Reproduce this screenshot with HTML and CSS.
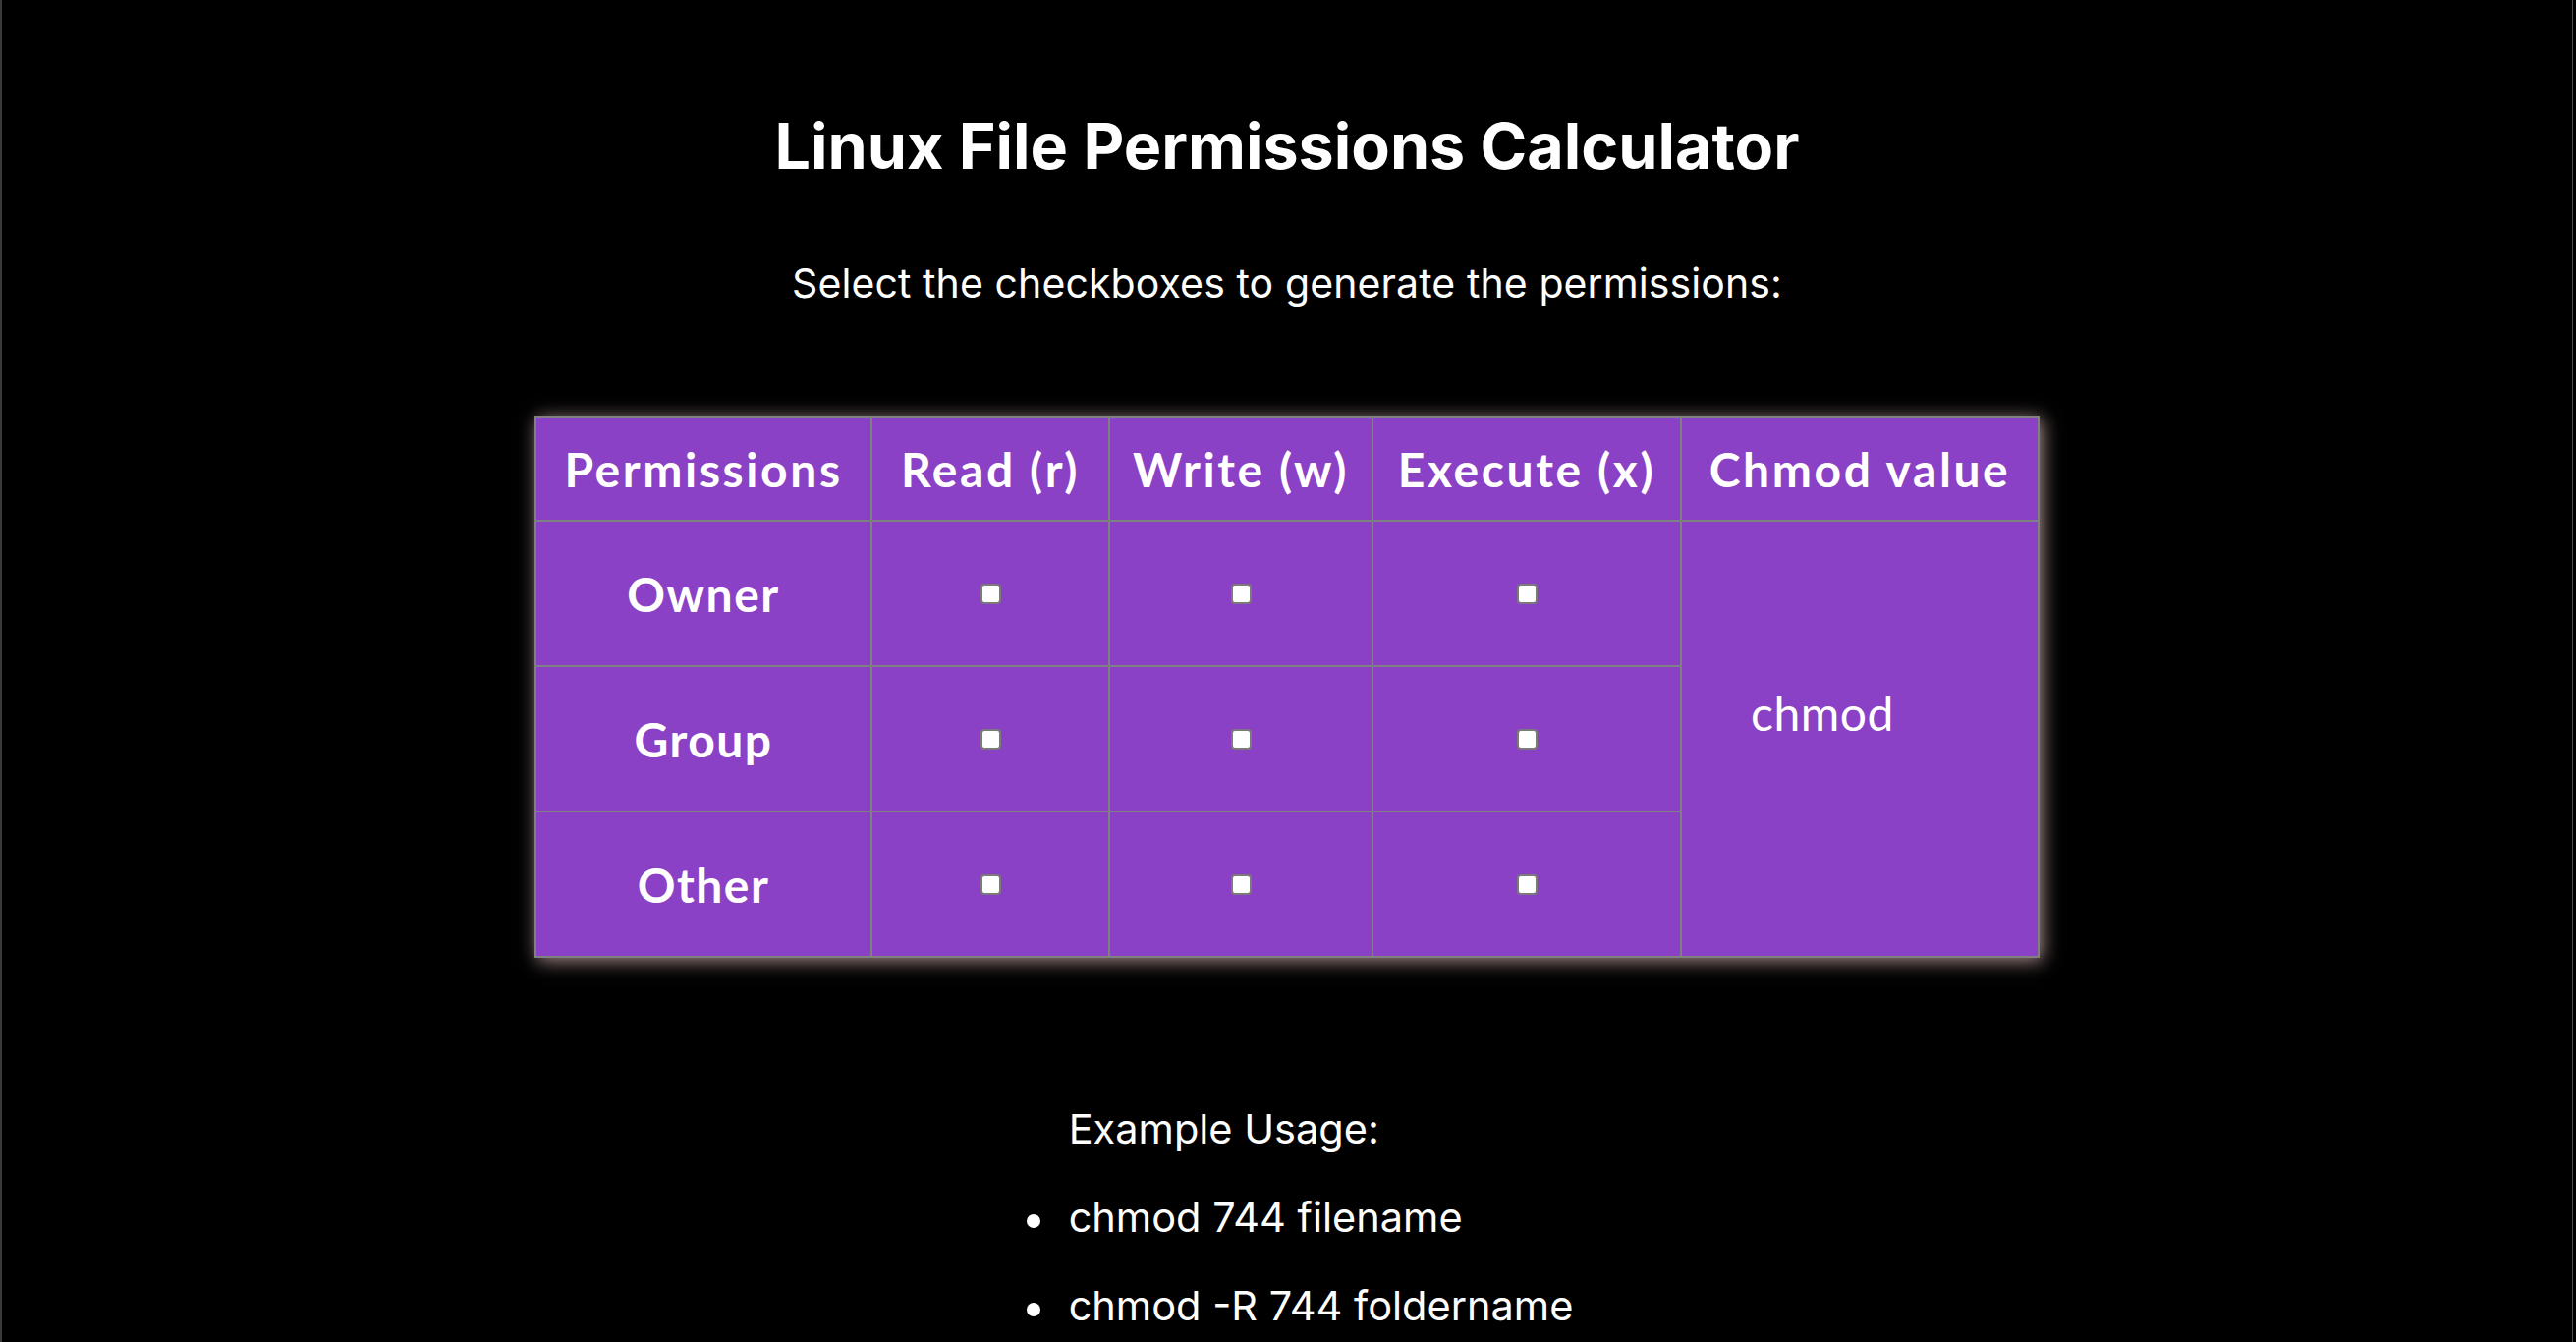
FILE: index.html
```html
<!DOCTYPE html>
<html lang="en">
<head>
<meta charset="utf-8">
<title>Linux File Permissions Calculator</title>
<link rel="stylesheet" href="styles.css">
</head>
<body>
<div class="page">
  <h1 class="title">Linux File Permissions Calculator</h1>
  <p class="subtitle">Select the checkboxes to generate the permissions:</p>
  <table class="perm-table">
    <colgroup>
      <col class="c-perm">
      <col class="c-read">
      <col class="c-write">
      <col class="c-exec">
      <col class="c-value">
    </colgroup>
    <thead>
      <tr>
        <th>Permissions</th>
        <th>Read (r)</th>
        <th>Write (w)</th>
        <th>Execute (x)</th>
        <th>Chmod value</th>
      </tr>
    </thead>
    <tbody>
      <tr>
        <td class="who">Owner</td>
        <td><input class="box" type="checkbox"></td>
        <td><input class="box" type="checkbox"></td>
        <td><input class="box" type="checkbox"></td>
        <td class="value" rowspan="3">chmod</td>
      </tr>
      <tr>
        <td class="who">Group</td>
        <td><input class="box" type="checkbox"></td>
        <td><input class="box" type="checkbox"></td>
        <td><input class="box" type="checkbox"></td>
      </tr>
      <tr>
        <td class="who">Other</td>
        <td><input class="box" type="checkbox"></td>
        <td><input class="box" type="checkbox"></td>
        <td><input class="box" type="checkbox"></td>
      </tr>
    </tbody>
  </table>
  <div class="usage">
    <p class="usage-title">Example Usage:</p>
    <ul class="usage-list">
      <li>chmod 744 filename</li>
      <li>chmod -R 744 foldername</li>
    </ul>
  </div>
</div>
</body>
</html>
```
FILE: styles.css
```css
html, body {
  margin: 0;
  padding: 0;
  background: #000;
}

body {
  color: #fff;
  font-family: Inter, "Liberation Sans", sans-serif;
  overflow: hidden;
}

.page {
  height: 1366px;
  box-sizing: border-box;
  margin-right: 3px;
  border-left: 2px solid #3a3a3a;
  border-right: 1px solid #4a4a4a;
  display: flex;
  flex-direction: column;
  align-items: center;
  overflow: hidden;
}

.title {
  margin: 110px 0 0;
  font-size: 64.6px;
  line-height: 78px;
  font-weight: 700;
}

.subtitle {
  margin: 76px 0 0;
  font-size: 41px;
  line-height: 48px;
  font-weight: 400;
  letter-spacing: 0.1px;
}

.perm-table {
  margin-top: 111px;
  width: 1530px;
  table-layout: fixed;
  border-collapse: collapse;
  background: #8b41c6;
  border: 2px solid #808080;
  box-shadow: 3px 3px 18px rgba(255, 215, 215, 0.65);
  font-family: Lato, "Open Sans", sans-serif;
  font-size: 48px;
}

.c-perm { width: 342px; }
.c-read { width: 242px; }
.c-write { width: 268px; }
.c-exec { width: 314px; }
.c-value { width: 364px; }

.perm-table th,
.perm-table td {
  border: 2px solid #808080;
  text-align: center;
  vertical-align: middle;
  padding: 0;
}

.perm-table th {
  height: 104px;
  font-weight: 700;
  letter-spacing: 2.6px;
}

.perm-table td {
  height: 146px;
}

.perm-table .who {
  font-weight: 700;
  letter-spacing: 1.5px;
}

.perm-table .value {
  text-align: left;
  font-weight: 400;
  padding: 0 0 54px 70px;
  letter-spacing: 0.5px;
}

.box {
  -webkit-appearance: none;
  appearance: none;
  display: block;
  margin: 0 auto;
  width: 21px;
  height: 21px;
  box-sizing: border-box;
  border: 2px solid #7a7a7a;
  border-radius: 4px;
  background: #fff;
}

.usage {
  margin-top: 150px;
  width: fit-content;
  padding-right: 11px;
  font-size: 41.5px;
  line-height: 48px;
}

.usage-title {
  margin: 0;
  padding-left: 80px;
}

.usage-list {
  margin: 42px 0 0;
  padding-left: 80px;
  list-style: none;
}

.usage-list li {
  display: flex;
  align-items: flex-start;
  margin: 0 0 42px -43px;
}

.usage-list li::before {
  content: "";
  flex: none;
  width: 14px;
  height: 14px;
  margin: 21px 29px 0 0;
  border-radius: 50%;
  background: #fff;
}
```
